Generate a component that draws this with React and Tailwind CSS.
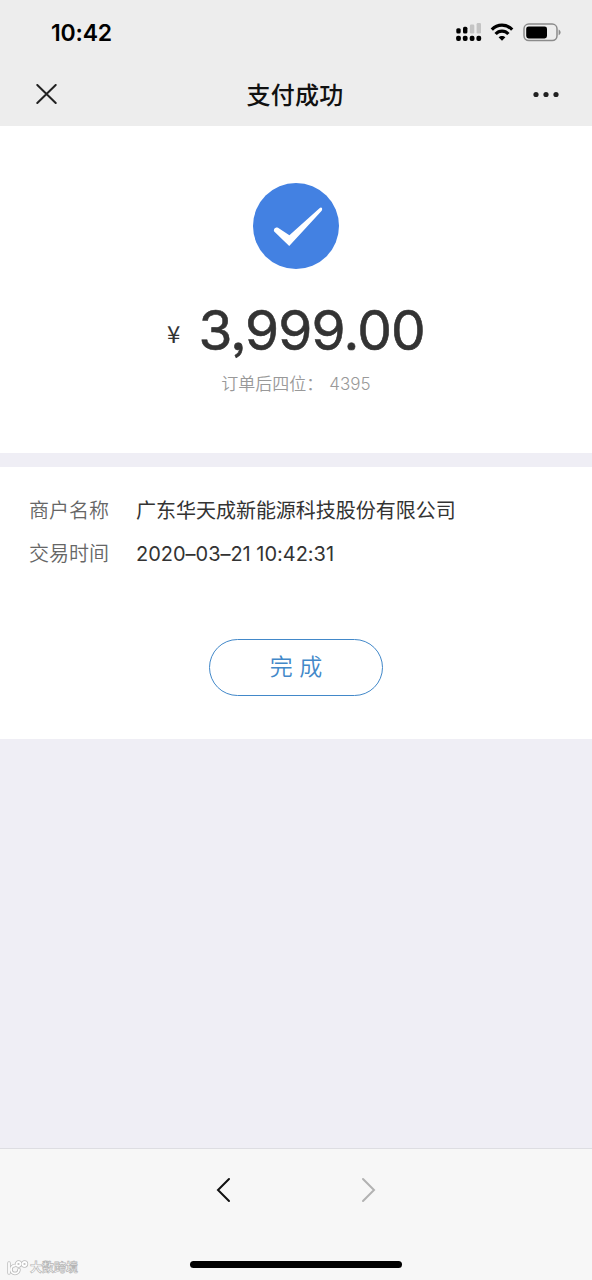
import React from 'react';

const details = [
    { label: '商户名称', value: '广东华天成新能源科技股份有限公司' },
    { label: '交易时间', value: '2020–03–21 10:42:31' },
];

function StatusBar() {
    return (
        <div className="flex h-16 items-center justify-between pl-[51px] pr-[31px]">
            <span className="pt-px text-[23px] font-semibold leading-8 tracking-[-0.2px] text-black">10:42</span>
            <div className="flex items-center">
                <svg className="h-5 w-[26px]" viewBox="0 0 26 20" fill="#000">
                    <rect x="0.3" y="6.2" width="4.4" height="5.2" rx="1.5" />
                    <rect x="7" y="4.8" width="4.4" height="6.6" rx="1.5" />
                    <rect x="13.9" y="2.6" width="4.4" height="8.8" rx="1.2" fill="#c4c4c4" />
                    <rect x="20.6" y="1" width="4.4" height="10.4" rx="1.2" fill="#c4c4c4" />
                    <rect x="0.1" y="13.8" width="4.8" height="5.2" rx="1.9" />
                    <rect x="6.8" y="13.8" width="4.8" height="5.2" rx="1.9" />
                    <rect x="13.7" y="13.8" width="4.8" height="5.2" rx="1.9" />
                    <rect x="20.4" y="13.8" width="4.8" height="5.2" rx="1.9" />
                </svg>
                <svg className="ml-2 h-5 w-6" viewBox="0 0 24 20" fill="none" stroke="#000" strokeWidth="3.2">
                    <path d="M1.8 7.6C7.5 1.7 16.5 1.7 22.2 7.6" />
                    <path d="M5.6 12C9.2 8.2 14.8 8.2 18.4 12" />
                    <path d="M8.6 15.3C10.5 13.4 13.5 13.4 15.4 15.3L12 18.8Z" fill="#000" stroke="none" />
                </svg>
                <svg className="ml-2 h-5 w-[39px]" viewBox="0 0 39 20">
                    <rect x="2" y="2" width="33" height="16.6" rx="4.8" fill="none" stroke="#8b8b8b" strokeWidth="1.5" />
                    <rect x="4.2" y="4.4" width="20.8" height="12" rx="2.4" fill="#000" />
                    <path d="M36.6 7.4C39.2 8.4 39.2 12.2 36.6 13.2Z" fill="#8b8b8b" />
                </svg>
            </div>
        </div>
    );
}

function TitleBar() {
    return (
        <div className="flex h-[62px] items-center justify-between pb-0.5 pl-9 pr-[33px]">
            <svg className="h-5 w-[21px]" viewBox="0 0 21 20" fill="none" stroke="#222" strokeWidth="2" strokeLinecap="round">
                <path d="M1.3 1L19.7 19M19.7 1L1.3 19" />
            </svg>
            <h1 className="pt-[3px] text-center text-2xl font-medium tracking-[0.3px] text-[#111]">支付成功</h1>
            <svg className="h-6 w-[26px]" viewBox="0 0 26 24" fill="#222">
                <circle cx="3" cy="12.5" r="2.6" />
                <circle cx="13" cy="12.5" r="2.6" />
                <circle cx="23" cy="12.5" r="2.6" />
            </svg>
        </div>
    );
}

export default function App() {
    return (
        <div className="flex h-[1280px] w-[592px] flex-col overflow-hidden bg-[#efeef5] font-['Inter','Noto_Sans_CJK_SC',sans-serif]">
            <header className="h-[126px] bg-[#ededed]">
                <StatusBar />
                <TitleBar />
            </header>

            <section className="flex h-[327px] flex-col items-center bg-white pt-[57px]">
                <svg className="h-[86px] w-[86px] shrink-0" viewBox="0 0 86 86">
                    <circle cx="43" cy="43" r="43" fill="#4381e2" />
                    <path d="M21.2 48.4C20 46.3 22.6 43.4 25 44.7L36.4 52.2L66.5 25.2C68.6 23.6 70 25.6 68.7 27.7L36.2 63Z" fill="#fff" />
                </svg>
                <div className="mt-7 flex h-16 items-center text-[#333]">
                    <span className="mr-[18px] pt-2 font-['Noto_Sans_CJK_SC',sans-serif] text-2xl leading-none">¥</span>
                    <span className="pt-px text-[55px] font-normal leading-[64px] tracking-[-0.8px] [-webkit-text-stroke:0.6px_#333] [font-feature-settings:'ss03']">3,999.00</span>
                </div>
                <p className="mt-[11px] flex text-[17px] leading-6 text-[#999]">
                    <span className="font-[350]">订单后四位：</span>
                    <span className="ml-1.5 font-light">4395</span>
                </p>
            </section>

            <section className="mt-3.5 flex h-[272px] flex-col items-center bg-white pt-[22px]">
                <dl className="w-full px-[29px] text-xl">
                    {details.map((row) => (
                        <div key={row.label} className="flex h-[43px] items-center">
                            <dt className="w-[107px] font-[350] text-[#666]">{row.label}</dt>
                            <dd className="whitespace-nowrap font-normal tracking-[-0.02px] text-[#333]">{row.value}</dd>
                        </div>
                    ))}
                </dl>
                <button className="mt-16 h-[57px] w-[174px] rounded-full border-[1.5px] border-[#4288c9] text-[23px] font-[350] text-[#4288c9]">
                    完 成
                </button>
            </section>

            <footer className="mt-auto flex h-[132px] flex-col border-t border-[#dddde2] bg-[#f7f7f7]">
                <div className="flex h-[82px] items-center justify-center gap-[130px]">
                    <svg className="h-[26px] w-[15px]" viewBox="0 0 15 26" fill="none" stroke="#111" strokeWidth="2" strokeLinecap="round">
                        <path d="M13 2L2 13L13 24" />
                    </svg>
                    <svg className="h-[26px] w-[15px]" viewBox="0 0 15 26" fill="none" stroke="#b2b2b2" strokeWidth="2" strokeLinecap="round">
                        <path d="M2 2L13 13L2 24" />
                    </svg>
                </div>
                <div className="mt-auto flex h-[31px] items-center">
                    <div className="flex w-[190px] items-center pl-1.5 pt-1.5">
                        <svg className="h-4 w-6" viewBox="0 0 24 16" fill="none" strokeLinecap="round">
                            <g stroke="#bbb" strokeWidth="3.4">
                                <path d="M3 3V13" />
                                <path d="M9 5.5A4 4 0 1 0 13 9.5" />
                                <circle cx="12.5" cy="4" r="2" />
                                <circle cx="18.5" cy="4" r="2" />
                            </g>
                            <g stroke="#fff" strokeWidth="1.8">
                                <path d="M3 3V13" />
                                <path d="M9 5.5A4 4 0 1 0 13 9.5" />
                                <circle cx="12.5" cy="4" r="2" />
                                <circle cx="18.5" cy="4" r="2" />
                            </g>
                        </svg>
                        <span className="text-xs font-bold leading-4 text-white [-webkit-text-stroke:0.7px_#b5b5b5]">大数跨境</span>
                    </div>
                    <div className="h-[7px] w-[212px] rounded-full bg-black" />
                </div>
            </footer>
        </div>
    );
}
